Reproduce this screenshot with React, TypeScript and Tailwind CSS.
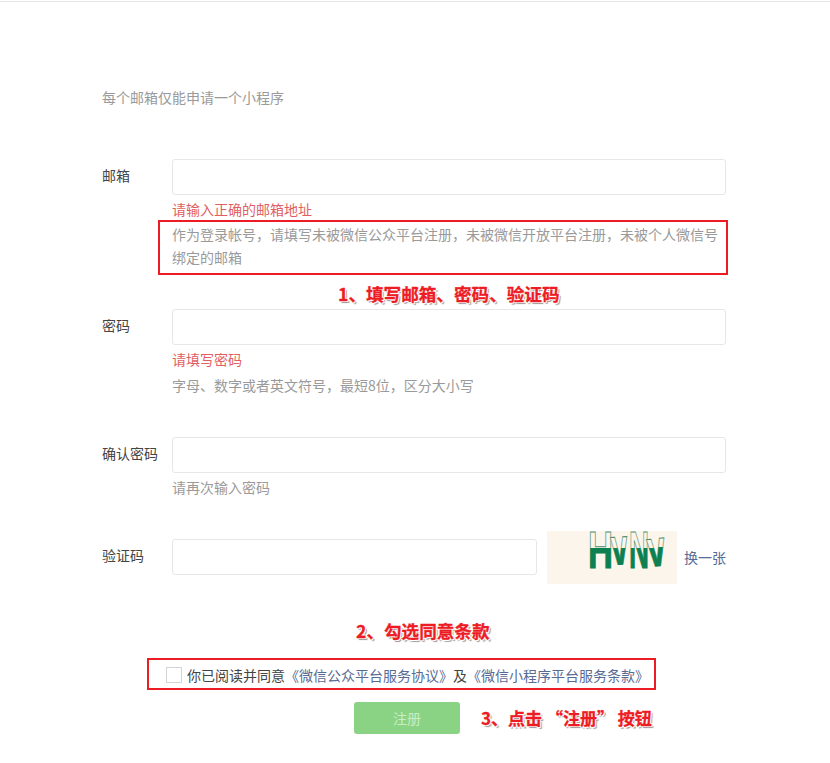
const cjk = "font-['Microsoft_YaHei','Noto_Sans_CJK_SC','Liberation_Sans',sans-serif]";

const comma = "\uFF0C";

function Field({
  label,
  error,
  hint,
  className,
}: {
  label: string;
  error?: string;
  hint?: React.ReactNode;
  className: string;
}) {
  return (
    <div className={`flex ${className}`}>
      <label className="w-[70px] shrink-0 pt-[6px] text-[14px] leading-[20px] text-[#444]">{label}</label>
      <div className="w-[554px]">
        <input className="block h-[36px] w-full rounded-[3px] border border-[#e7e7eb] bg-white outline-none" />
        {error && <p className="mt-[4px] text-[14px] leading-[20px] text-[#e15f63]">{error}</p>}
        {hint}
      </div>
    </div>
  );
}

const glyphs = [
  { ch: "H", x: 41, y: 37, w: 25, r: 0 },
  { ch: "v", x: 65, y: 34, w: 17, r: -4 },
  { ch: "N", x: 82, y: 37, w: 20, r: 0 },
  { ch: "v", x: 102, y: 36, w: 18, r: -6 },
];

function Captcha() {
  return (
    <svg width="130" height="53" viewBox="0 0 130 53" className="block overflow-visible bg-[#fbf5ec]">
      <defs>
        <linearGradient id="captcha-fill" gradientUnits="userSpaceOnUse" x1="0" y1="0" x2="0" y2="53">
          <stop offset="0.33" stopColor="#fbf5ec" />
          <stop offset="0.33" stopColor="#0e7f4f" />
        </linearGradient>
        <linearGradient id="captcha-line" gradientUnits="userSpaceOnUse" x1="0" y1="0" x2="0" y2="53">
          <stop offset="0.33" stopColor="#4b8f6c" />
          <stop offset="0.33" stopColor="#0e7f4f" />
        </linearGradient>
      </defs>
      {glyphs.map((g, i) => (
        <text
          key={i}
          x={g.x}
          y={g.y}
          fontFamily="'Liberation Sans',sans-serif"
          fontWeight="700"
          fontSize="52"
          textLength={g.w}
          lengthAdjust="spacingAndGlyphs"
          fill="url(#captcha-fill)"
          stroke="url(#captcha-line)"
          strokeWidth="1"
          transform={`rotate(${g.r} ${g.x} ${g.y})`}
        >
          {g.ch}
        </text>
      ))}
    </svg>
  );
}

const note =
  "absolute whitespace-pre leading-[24px] font-bold text-[#ed1c24] [-webkit-text-stroke:0.3px_#ed1c24] [text-shadow:1px_1px_0_#fff,-1px_-1px_0_#fff,1px_-1px_0_#fff,-1px_1px_0_#fff,2px_2px_1px_#999]";

export default function App() {
  return (
    <div className={`relative h-[763px] w-[830px] overflow-hidden bg-white ${cjk}`}>
      <div className="mt-[1px] h-[1px] bg-[#e7e7e7]" />
      <div className="pl-[102px]">
        <p className="pt-[85px] text-[14px] leading-[20px] text-[#9a9a9a]">每个邮箱仅能申请一个小程序</p>

        <Field
          className="mt-[52px]"
          label="邮箱"
          error="请输入正确的邮箱地址"
          hint={
            <p className="mt-[4px] text-[14px] leading-[23px] text-[#9a9a9a]">
              {`作为登录帐号${comma}请填写未被微信公众平台注册${comma}未被微信开放平台注册${comma}未被个人微信号绑定的邮箱`}
            </p>
          }
        />
        <Field
          className="mt-[40px]"
          label="密码"
          error="请填写密码"
          hint={
            <p className="mt-[6px] text-[14px] leading-[20px] text-[#9a9a9a]">
              {`字母、数字或者英文符号${comma}最短8位${comma}区分大小写`}
            </p>
          }
        />
        <Field
          className="mt-[42px]"
          label="确认密码"
          hint={<p className="mt-[4px] text-[14px] leading-[20px] text-[#9a9a9a]">请再次输入密码</p>}
        />

        <div className="mt-[34px] flex items-start">
          <label className="w-[70px] shrink-0 pt-[14px] text-[14px] leading-[20px] text-[#444]">验证码</label>
          <input className="mt-[8px] block h-[36px] w-[365px] rounded-[3px] border border-[#e7e7eb] bg-white outline-none" />
          <div className="ml-[10px]">
            <Captcha />
          </div>
          <a className="ml-[7px] mt-[16px] text-[14px] leading-[20px] text-[#576b95]">换一张</a>
        </div>

        <div className="ml-[64px] mt-[81px] flex items-center">
          <span className="block h-[16px] w-[16px] border border-[#d4d4d4] bg-white" />
          <span className="ml-[5px] whitespace-nowrap text-[14px] leading-[20px] text-[#444]">
            你已阅读并同意
            <a className="text-[#576b95]">《微信公众平台服务协议》</a>及<a className="text-[#576b95]">《微信小程序平台服务条款》</a>
          </span>
        </div>

        <button className="ml-[252px] mt-[17px] block h-[32px] w-[106px] rounded-[3px] bg-[#8bd384] text-[14px] text-[#c9eec5]">注册</button>
      </div>

      {/* annotations drawn over the page */}
      <div className="absolute left-[158px] top-[220px] h-[55px] w-[570px] border-2 border-[#ed1c24]" />
      <div className="absolute left-[147px] top-[658px] h-[32px] w-[509px] border-2 border-[#ed1c24]" />
      <span className={`${note} left-[338px] top-[282px] text-[17.6px]`}>1、填写邮箱、密码、验证码</span>
      <span className={`${note} left-[356px] top-[619px] text-[17.6px]`}>2、勾选同意条款</span>
      <span className={`${note} left-[481px] top-[706px] text-[17px]`}>3、点击 “注册” 按钮</span>
    </div>
  );
}
